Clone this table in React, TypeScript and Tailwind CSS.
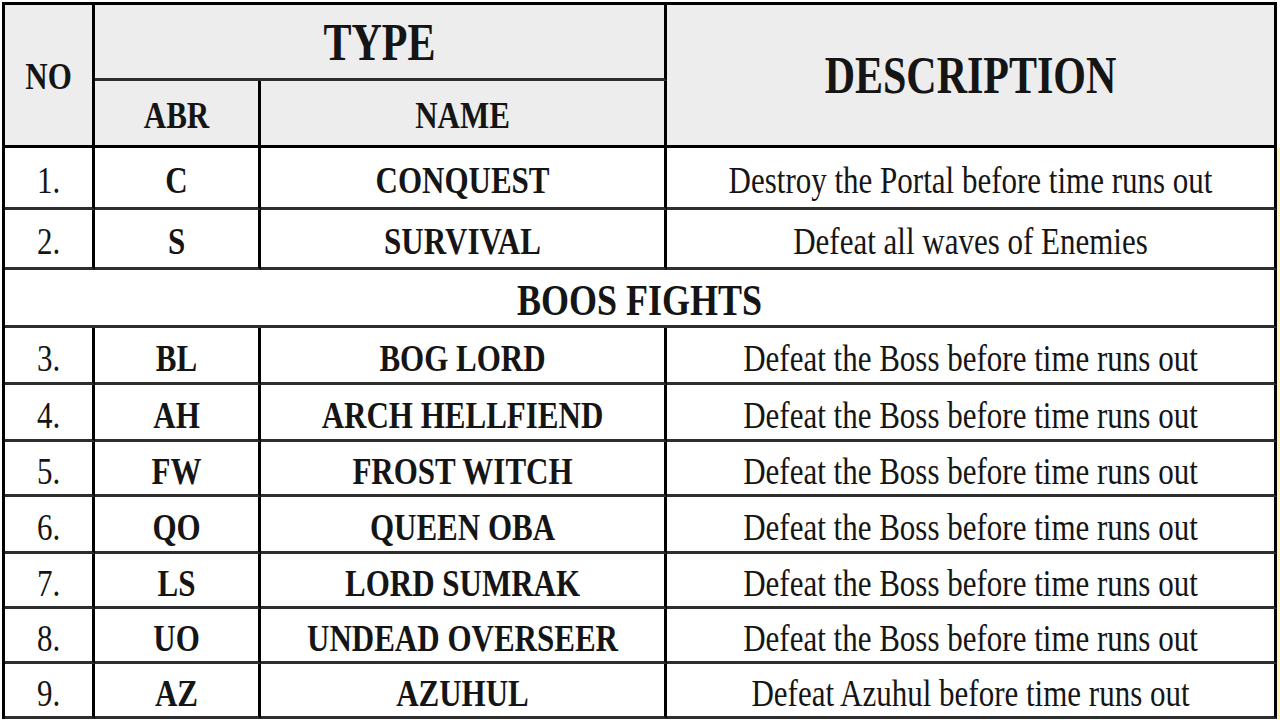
import React from 'react'

type Row = {
  no: string
  abr: string
  name: string
  desc: string
}

const modes: Row[] = [
  { no: '1.', abr: 'C', name: 'CONQUEST', desc: 'Destroy the Portal before time runs out' },
  { no: '2.', abr: 'S', name: 'SURVIVAL', desc: 'Defeat all waves of Enemies' },
]

const bosses: Row[] = [
  { no: '3.', abr: 'BL', name: 'BOG LORD', desc: 'Defeat the Boss before time runs out' },
  { no: '4.', abr: 'AH', name: 'ARCH HELLFIEND', desc: 'Defeat the Boss before time runs out' },
  { no: '5.', abr: 'FW', name: 'FROST WITCH', desc: 'Defeat the Boss before time runs out' },
  { no: '6.', abr: 'QO', name: 'QUEEN OBA', desc: 'Defeat the Boss before time runs out' },
  { no: '7.', abr: 'LS', name: 'LORD SUMRAK', desc: 'Defeat the Boss before time runs out' },
  { no: '8.', abr: 'UO', name: 'UNDEAD OVERSEER', desc: 'Defeat the Boss before time runs out' },
  { no: '9.', abr: 'AZ', name: 'AZUHUL', desc: 'Defeat Azuhul before time runs out' },
]

const cell = 'flex items-center justify-center border-r-[3px] border-b-[3px] border-r-black border-b-[#2e2e2e]'
const head = `${cell} bg-[#ededed]`
const body = `${cell} pt-[4px]`

// text in the shot is stretched vertically, so scale glyphs up on y
const Txt: React.FC<{ children: React.ReactNode; className?: string }> = ({ children, className = '' }) => (
  <span className={`inline-block scale-y-[1.25] whitespace-nowrap leading-none ${className}`}>{children}</span>
)

const DataRow: React.FC<{ row: Row }> = ({ row }) => (
  <>
    <div className={body}>
      <Txt className="text-[31px]">{row.no}</Txt>
    </div>
    <div className={body}>
      <Txt className="text-[31px] font-bold">{row.abr}</Txt>
    </div>
    <div className={body}>
      <Txt className="text-[31px] font-bold">{row.name}</Txt>
    </div>
    <div className={body}>
      <Txt className="text-[31px]">{row.desc}</Txt>
    </div>
  </>
)

export default function App() {
  return (
    <div className="relative h-[720px] w-[1280px] overflow-hidden bg-white font-['Liberation_Serif',serif] text-[#151515]">
      <div className="flex pl-[2px] pt-[2px]">
        <div className="grid grid-cols-[90px_166px_406px_610px] grid-rows-[76px_67px_62px_60px_58px_57px_57px_55px_57px_55px_55px_55px] border-l-[3px] border-t-[3px] border-black">
          <div className={`${head} row-span-2 border-b-black`}>
            <Txt className="text-[31px] font-bold">NO</Txt>
          </div>
          <div className={`${head} col-span-2`}>
            <Txt className="text-[42px] font-bold scale-y-[1.3]">TYPE</Txt>
          </div>
          <div className={`${head} row-span-2 border-b-black`}>
            <Txt className="text-[42px] font-bold scale-y-[1.3]">DESCRIPTION</Txt>
          </div>
          <div className={`${head} border-b-black pt-[2px]`}>
            <Txt className="text-[31px] font-bold">ABR</Txt>
          </div>
          <div className={`${head} border-b-black pt-[2px]`}>
            <Txt className="text-[31px] font-bold">NAME</Txt>
          </div>

          {modes.map(r => (
            <DataRow key={r.no} row={r} />
          ))}

          <div className={`${body} col-span-4`}>
            <Txt className="text-[36px] font-bold scale-y-[1.3]">BOOS FIGHTS</Txt>
          </div>

          {bosses.map(r => (
            <DataRow key={r.no} row={r} />
          ))}
        </div>
        <div className="mt-[146px] w-[3px] bg-[#fbefb4]" />
      </div>
    </div>
  )
}
